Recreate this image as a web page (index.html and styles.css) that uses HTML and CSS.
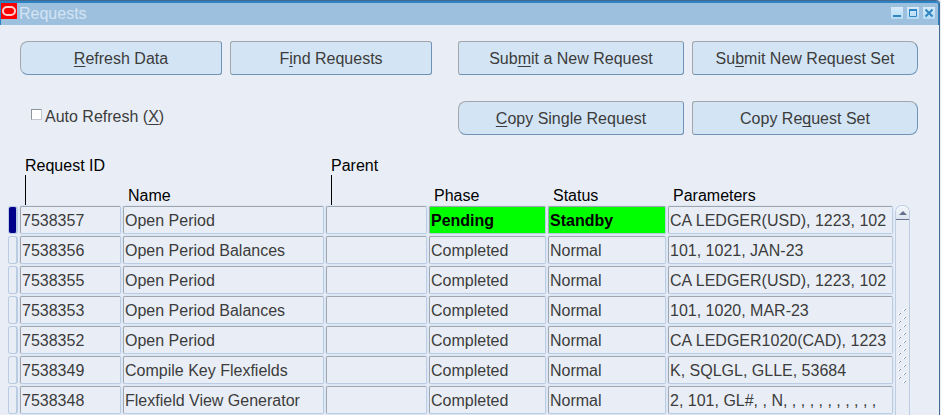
FILE: index.html
```html
<!DOCTYPE html>
<html lang="en">
<head>
    <meta charset="UTF-8">
    <title>Requests</title>
    <link rel="stylesheet" href="styles.css">
</head>
<body>
<div class="window">
    <header class="titlebar">
        <svg class="logo" width="16" height="16" viewBox="0 0 16 16" aria-hidden="true">
            <rect width="16" height="16" fill="#ff0000"/>
            <rect x="2" y="4" width="12" height="8" rx="4" fill="none" stroke="#ffd0d0" stroke-width="2"/>
        </svg>
        <h1 class="title">Requests</h1>
        <div class="controls">
            <button class="control" type="button" aria-label="Minimize">
                <svg width="12" height="12" viewBox="0 0 12 12"><path d="M2 9h8" stroke="#2f86c3" stroke-width="2"/></svg>
            </button>
            <button class="control" type="button" aria-label="Maximize">
                <svg width="12" height="12" viewBox="0 0 12 12"><path d="M2.5 2v7.5h7V2" fill="none" stroke="#2f86c3"/><path d="M2 3h8" stroke="#2f86c3" stroke-width="2"/></svg>
            </button>
            <button class="control" type="button" aria-label="Close">
                <svg width="12" height="12" viewBox="0 0 12 12"><path d="M2.5 2.5l7 7M9.5 2.5l-7 7" stroke="#2f86c3" stroke-width="2"/></svg>
            </button>
        </div>
    </header>

    <div class="toolbar">
        <div class="group">
            <button class="btn round-left" type="button"><span><u>R</u>efresh Data</span></button>
            <button class="btn" type="button"><span>F<u>i</u>nd Requests</span></button>
            <div class="auto">
                <input type="checkbox" id="autoRefresh">
                <label for="autoRefresh">Auto Refresh (<u>X</u>)</label>
            </div>
        </div>
        <div class="group">
            <button class="btn" type="button"><span>Sub<u>m</u>it a New Request</span></button>
            <button class="btn round-right" type="button"><span>Su<u>b</u>mit New Request Set</span></button>
            <button class="btn round-left" type="button"><span><u>C</u>opy Single Request</span></button>
            <button class="btn round-right" type="button"><span>Copy Re<u>q</u>uest Set</span></button>
        </div>
    </div>

    <div class="grid">
        <table class="requests">
            <colgroup>
                <col class="col-marker">
                <col class="col-id">
                <col class="col-name">
                <col class="col-parent">
                <col class="col-phase">
                <col class="col-status">
                <col>
            </colgroup>
            <thead>
                <tr>
                    <td></td>
                    <th class="raised" scope="col">Request ID</th>
                    <th scope="col">Name</th>
                    <th class="raised" scope="col">Parent</th>
                    <th scope="col">Phase</th>
                    <th scope="col">Status</th>
                    <th scope="col">Parameters</th>
                </tr>
            </thead>
            <tbody>
                <tr class="current">
                    <td><div class="marker"></div></td>
                    <td><div class="field">7538357</div></td>
                    <td><div class="field">Open Period</div></td>
                    <td><div class="field"></div></td>
                    <td><div class="field alert">Pending</div></td>
                    <td><div class="field alert">Standby</div></td>
                    <td><div class="field">CA LEDGER(USD), 1223, 102</div></td>
                </tr>
                <tr>
                    <td><div class="marker"></div></td>
                    <td><div class="field">7538356</div></td>
                    <td><div class="field">Open Period Balances</div></td>
                    <td><div class="field"></div></td>
                    <td><div class="field">Completed</div></td>
                    <td><div class="field">Normal</div></td>
                    <td><div class="field">101, 1021, JAN-23</div></td>
                </tr>
                <tr>
                    <td><div class="marker"></div></td>
                    <td><div class="field">7538355</div></td>
                    <td><div class="field">Open Period</div></td>
                    <td><div class="field"></div></td>
                    <td><div class="field">Completed</div></td>
                    <td><div class="field">Normal</div></td>
                    <td><div class="field">CA LEDGER(USD), 1223, 102</div></td>
                </tr>
                <tr>
                    <td><div class="marker"></div></td>
                    <td><div class="field">7538353</div></td>
                    <td><div class="field">Open Period Balances</div></td>
                    <td><div class="field"></div></td>
                    <td><div class="field">Completed</div></td>
                    <td><div class="field">Normal</div></td>
                    <td><div class="field">101, 1020, MAR-23</div></td>
                </tr>
                <tr>
                    <td><div class="marker"></div></td>
                    <td><div class="field">7538352</div></td>
                    <td><div class="field">Open Period</div></td>
                    <td><div class="field"></div></td>
                    <td><div class="field">Completed</div></td>
                    <td><div class="field">Normal</div></td>
                    <td><div class="field">CA LEDGER1020(CAD), 1223</div></td>
                </tr>
                <tr>
                    <td><div class="marker"></div></td>
                    <td><div class="field">7538349</div></td>
                    <td><div class="field">Compile Key Flexfields</div></td>
                    <td><div class="field"></div></td>
                    <td><div class="field">Completed</div></td>
                    <td><div class="field">Normal</div></td>
                    <td><div class="field">K, SQLGL, GLLE, 53684</div></td>
                </tr>
                <tr>
                    <td><div class="marker"></div></td>
                    <td><div class="field">7538348</div></td>
                    <td><div class="field">Flexfield View Generator</div></td>
                    <td><div class="field"></div></td>
                    <td><div class="field">Completed</div></td>
                    <td><div class="field">Normal</div></td>
                    <td><div class="field">2, 101, GL#, , N, , , , , , , , , , ,</div></td>
                </tr>
            </tbody>
        </table>
        <div class="scrollbar">
            <button class="scroll-up" type="button" aria-label="Scroll up">
                <svg width="8" height="4" viewBox="0 0 8 4"><path d="M4 0l4 4H0z" fill="#66708c"/></svg>
            </button>
            <svg class="grip" width="9" height="76" aria-hidden="true">
                <defs>
                    <pattern id="dots" width="9" height="8" patternUnits="userSpaceOnUse">
                        <path d="M5 1h2v1h-1v1h-1zM0 5h2v1h-1v1h-1z" fill="#ffffff"/>
                        <path d="M7 1h1v1h-1zM6 2h1v1h-1zM2 5h1v1h-1zM1 6h1v1h-1z" fill="#8aa0bd"/>
                    </pattern>
                </defs>
                <rect width="9" height="76" fill="url(#dots)"/>
            </svg>
        </div>
    </div>
</div>
</body>
</html>
```

FILE: styles.css
```css
* {
    box-sizing: border-box;
}

body {
    margin: 0;
    background: #e9eef6;
    color: #3c3c3c;
    font-family: "Liberation Sans", Arial, sans-serif;
    font-size: 16px;
    line-height: 20px;
}

button {
    font: inherit;
    color: inherit;
    padding: 0;
}

u {
    text-decoration-thickness: 1px;
    text-underline-offset: 2px;
    text-decoration-skip-ink: none;
}

.window {
    min-height: 100vh;
    margin-right: 1px;
    border-top: 1px solid #47698f;
    border-right: 1px solid #47698f;
    border-top-right-radius: 4px;
}

/* title bar */
.titlebar {
    display: flex;
    align-items: flex-start;
    height: 24px;
    border-top: 2px solid #2a84c6;
    border-left: 1px solid #2a84c6;
    border-right: 1px solid #2a84c6;
    border-top-right-radius: 3px;
    background: #9ec0df;
}

.title {
    margin: 0 0 0 2px;
    color: #d3e4f3;
    font-size: 16px;
    font-weight: normal;
    line-height: 22px;
}

.controls {
    display: flex;
    gap: 4px;
    margin: 4px 3px 0 auto;
}

.control {
    width: 12px;
    height: 12px;
    border: none;
    background: linear-gradient(#d6ebfa, #b5daf3);
}

.control svg {
    display: block;
}

/* buttons */
.toolbar {
    display: grid;
    grid-template-columns: 412fr 460fr;
    gap: 26px;
    padding: 16px 21px 20px 20px;
}

.group {
    display: grid;
    grid-template-columns: 1fr 1fr;
    grid-auto-rows: 34px;
    gap: 26px 8px;
}

.btn {
    padding-top: 2px;
    border: 1px solid;
    border-color: #a3a7ab #6f92b5 #6f92b5 #a3a7ab;
    border-radius: 3px;
    background: #d3e5f5;
    white-space: nowrap;
}

.round-left {
    border-top-left-radius: 8px;
    border-bottom-left-radius: 8px;
}

.round-right {
    border-top-right-radius: 8px;
    border-bottom-right-radius: 8px;
}

.auto {
    display: flex;
    padding: 6px 0 0 11px;
    gap: 3px;
}

.auto input {
    appearance: none;
    width: 11px;
    height: 11px;
    margin: 2px 0 0;
    border: 1px solid;
    border-color: #8f9499 #c0c6cc #c0c6cc #8f9499;
    background: #ffffff;
}

.auto input:checked {
    background: #00008b;
}

/* requests table */
.grid {
    display: flex;
    padding: 0 29px 0 7px;
}

.requests {
    flex: 1;
    width: 100%;
    table-layout: fixed;
    border-spacing: 0;
}

.col-marker { width: 12px; }
.col-id { width: 103px; }
.col-name { width: 203px; }
.col-parent { width: 103px; }
.col-phase { width: 119px; }
.col-status { width: 120px; }

.requests td {
    height: 30px;
    padding: 1px;
}

.requests th {
    height: 50px;
    padding: 0 0 0 6px;
    color: #000000;
    font-weight: normal;
    line-height: 18px;
    text-align: left;
    vertical-align: bottom;
}

/* leader line from a raised heading down to its column */
.raised::after {
    content: "";
    display: block;
    height: 30px;
    border-left: 1px solid #000000;
}

.field {
    height: 28px;
    padding: 4px 0 0 1px;
    border: 1px solid;
    border-color: #9fa6b0 #b9cce4 #b9cce4 #9fa6b0;
    border-radius: 2px;
    box-shadow: 0 0 0 1px #dde7f3;
    overflow: hidden;
    white-space: nowrap;
}

.alert {
    background: #00ff00;
    color: #000000;
    font-weight: bold;
}

.marker {
    height: 28px;
    border: 1px solid #b9cce4;
    border-right-width: 2px;
    border-radius: 3px;
}

.current .marker {
    background: #00008b;
}

.scrollbar {
    width: 15px;
    margin: 50px 0 0 1px;
    border: 1px solid #bccde4;
    border-bottom: none;
    border-radius: 7px 7px 0 0;
}

.scroll-up {
    display: flex;
    justify-content: center;
    align-items: center;
    width: 100%;
    height: 14px;
    border: none;
    border-bottom: 1px solid #66708c;
    border-radius: 6px 6px 0 0;
    background: linear-gradient(#f4f7fb, #dde5f0);
}

.grip {
    display: block;
    margin: 88px auto 0;
}
```
